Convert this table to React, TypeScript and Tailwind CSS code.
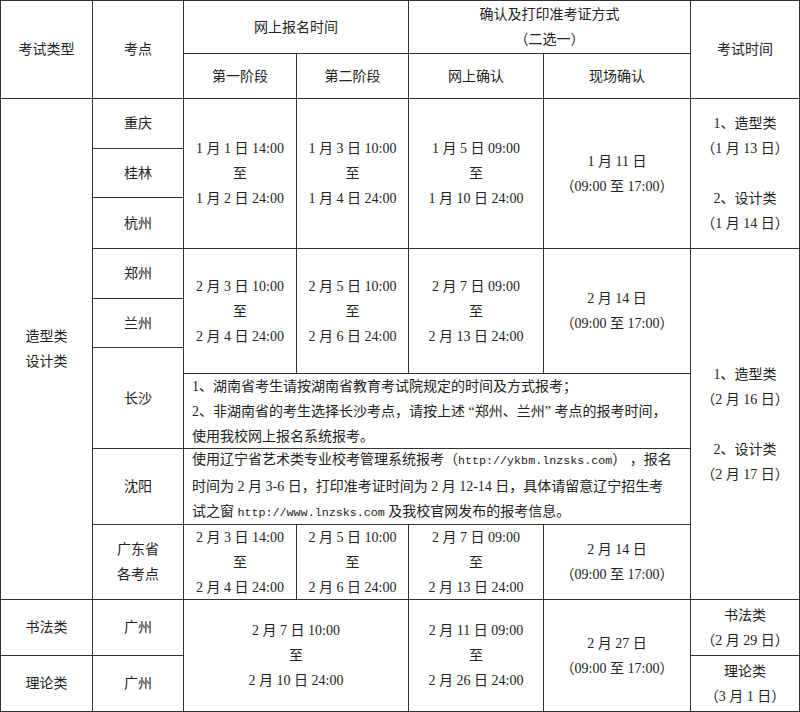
import type { ReactNode } from "react";

const Cell = ({ className = "", children }: { className?: string; children?: ReactNode }) => (
  <div
    className={`flex items-center justify-center text-center border-r border-b border-[#333] leading-[25px] ${className}`}
  >
    <div>{children}</div>
  </div>
);

const Lines = ({ items }: { items: string[] }) => (
  <>
    {items.map((t, i) => (
      <div key={i} className="whitespace-nowrap h-[25px]">
        {t}
      </div>
    ))}
  </>
);

const Url = ({ children }: { children: ReactNode }) => (
  <span className="font-['Liberation_Mono',monospace] text-[11.7px]">{children}</span>
);

const App = () => {
  return (
    <div className="w-[800px] h-[712px] bg-white overflow-hidden">
      <div className="grid grid-cols-[92px_91px_113px_112px_135px_147px_109px] grid-rows-[53px_45px_50px_49px_51px_50px_49px_26px_75px_76px_75px_56px_56px] border-l border-t border-[#333] text-[14px] text-[#222] font-['Liberation_Serif','Noto_Sans_CJK_SC',serif]">
        {/* header */}
        <Cell className="col-start-1 col-end-2 row-start-1 row-end-3">考试类型</Cell>
        <Cell className="col-start-2 col-end-3 row-start-1 row-end-3">考点</Cell>
        <Cell className="col-start-3 col-end-5 row-start-1 row-end-2">网上报名时间</Cell>
        <Cell className="col-start-5 col-end-7 row-start-1 row-end-2">
          <Lines items={["确认及打印准考证方式", "（二选一）"]} />
        </Cell>
        <Cell className="col-start-7 col-end-8 row-start-1 row-end-3">考试时间</Cell>
        <Cell className="col-start-3 col-end-4 row-start-2 row-end-3">第一阶段</Cell>
        <Cell className="col-start-4 col-end-5 row-start-2 row-end-3">第二阶段</Cell>
        <Cell className="col-start-5 col-end-6 row-start-2 row-end-3">网上确认</Cell>
        <Cell className="col-start-6 col-end-7 row-start-2 row-end-3">现场确认</Cell>

        {/* 造型类 设计类 */}
        <Cell className="col-start-1 col-end-2 row-start-3 row-end-12">
          <Lines items={["造型类", "设计类"]} />
        </Cell>
        <Cell className="col-start-2 col-end-3 row-start-3 row-end-4">重庆</Cell>
        <Cell className="col-start-2 col-end-3 row-start-4 row-end-5">桂林</Cell>
        <Cell className="col-start-2 col-end-3 row-start-5 row-end-6">杭州</Cell>
        <Cell className="col-start-2 col-end-3 row-start-6 row-end-7">郑州</Cell>
        <Cell className="col-start-2 col-end-3 row-start-7 row-end-8">兰州</Cell>
        <Cell className="col-start-2 col-end-3 row-start-8 row-end-10">长沙</Cell>
        <Cell className="col-start-2 col-end-3 row-start-10 row-end-11">沈阳</Cell>
        <Cell className="col-start-2 col-end-3 row-start-11 row-end-12">
          <Lines items={["广东省", "各考点"]} />
        </Cell>

        {/* group 1 */}
        <Cell className="col-start-3 col-end-4 row-start-3 row-end-6">
          <Lines items={["1 月 1 日 14:00", "至", "1 月 2 日 24:00"]} />
        </Cell>
        <Cell className="col-start-4 col-end-5 row-start-3 row-end-6">
          <Lines items={["1 月 3 日 10:00", "至", "1 月 4 日 24:00"]} />
        </Cell>
        <Cell className="col-start-5 col-end-6 row-start-3 row-end-6">
          <Lines items={["1 月 5 日 09:00", "至", "1 月 10 日 24:00"]} />
        </Cell>
        <Cell className="col-start-6 col-end-7 row-start-3 row-end-6">
          <Lines items={["1 月 11 日", "（09:00 至 17:00）"]} />
        </Cell>
        <Cell className="col-start-7 col-end-8 row-start-3 row-end-6">
          <Lines items={["1、造型类", "（1 月 13 日）", "", "2、设计类", "（1 月 14 日）"]} />
        </Cell>

        {/* group 2 */}
        <Cell className="col-start-3 col-end-4 row-start-6 row-end-9">
          <Lines items={["2 月 3 日 10:00", "至", "2 月 4 日 24:00"]} />
        </Cell>
        <Cell className="col-start-4 col-end-5 row-start-6 row-end-9">
          <Lines items={["2 月 5 日 10:00", "至", "2 月 6 日 24:00"]} />
        </Cell>
        <Cell className="col-start-5 col-end-6 row-start-6 row-end-9">
          <Lines items={["2 月 7 日 09:00", "至", "2 月 13 日 24:00"]} />
        </Cell>
        <Cell className="col-start-6 col-end-7 row-start-6 row-end-9">
          <Lines items={["2 月 14 日", "（09:00 至 17:00）"]} />
        </Cell>
        <Cell className="col-start-7 col-end-8 row-start-6 row-end-12">
          <Lines items={["1、造型类", "（2 月 16 日）", "", "2、设计类", "（2 月 17 日）"]} />
        </Cell>

        {/* notes */}
        <Cell className="col-start-3 col-end-7 row-start-9 row-end-10 !justify-start text-left px-2">
          <div className="whitespace-nowrap">1、湖南省考生请按湖南省教育考试院规定的时间及方式报考；</div>
          <div className="whitespace-nowrap">2、非湖南省的考生选择长沙考点，请按上述 “郑州、兰州” 考点的报考时间，</div>
          <div className="whitespace-nowrap">使用我校网上报名系统报考。</div>
        </Cell>
        <Cell className="col-start-3 col-end-7 row-start-10 row-end-11 !justify-start text-left px-2">
          <div className="whitespace-nowrap">
            使用辽宁省艺术类专业校考管理系统报考（<Url>http://ykbm.lnzsks.com</Url>） ，报名
          </div>
          <div className="whitespace-nowrap">时间为 2 月 3-6 日，打印准考证时间为 2 月 12-14 日，具体请留意辽宁招生考</div>
          <div className="whitespace-nowrap">
            试之窗 <Url>http://www.lnzsks.com</Url> 及我校官网发布的报考信息。
          </div>
        </Cell>

        {/* 广东 */}
        <Cell className="col-start-3 col-end-4 row-start-11 row-end-12">
          <Lines items={["2 月 3 日 14:00", "至", "2 月 4 日 24:00"]} />
        </Cell>
        <Cell className="col-start-4 col-end-5 row-start-11 row-end-12">
          <Lines items={["2 月 5 日 10:00", "至", "2 月 6 日 24:00"]} />
        </Cell>
        <Cell className="col-start-5 col-end-6 row-start-11 row-end-12">
          <Lines items={["2 月 7 日 09:00", "至", "2 月 13 日 24:00"]} />
        </Cell>
        <Cell className="col-start-6 col-end-7 row-start-11 row-end-12">
          <Lines items={["2 月 14 日", "（09:00 至 17:00）"]} />
        </Cell>

        {/* 书法类 理论类 */}
        <Cell className="col-start-1 col-end-2 row-start-12 row-end-13">书法类</Cell>
        <Cell className="col-start-2 col-end-3 row-start-12 row-end-13">广州</Cell>
        <Cell className="col-start-1 col-end-2 row-start-13 row-end-14">理论类</Cell>
        <Cell className="col-start-2 col-end-3 row-start-13 row-end-14">广州</Cell>
        <Cell className="col-start-3 col-end-5 row-start-12 row-end-14">
          <Lines items={["2 月 7 日 10:00", "至", "2 月 10 日 24:00"]} />
        </Cell>
        <Cell className="col-start-5 col-end-6 row-start-12 row-end-14">
          <Lines items={["2 月 11 日 09:00", "至", "2 月 26 日 24:00"]} />
        </Cell>
        <Cell className="col-start-6 col-end-7 row-start-12 row-end-14">
          <Lines items={["2 月 27 日", "（09:00 至 17:00）"]} />
        </Cell>
        <Cell className="col-start-7 col-end-8 row-start-12 row-end-13">
          <Lines items={["书法类", "（2 月 29 日）"]} />
        </Cell>
        <Cell className="col-start-7 col-end-8 row-start-13 row-end-14">
          <Lines items={["理论类", "（3 月 1 日）"]} />
        </Cell>
      </div>
    </div>
  );
};

export default App;
